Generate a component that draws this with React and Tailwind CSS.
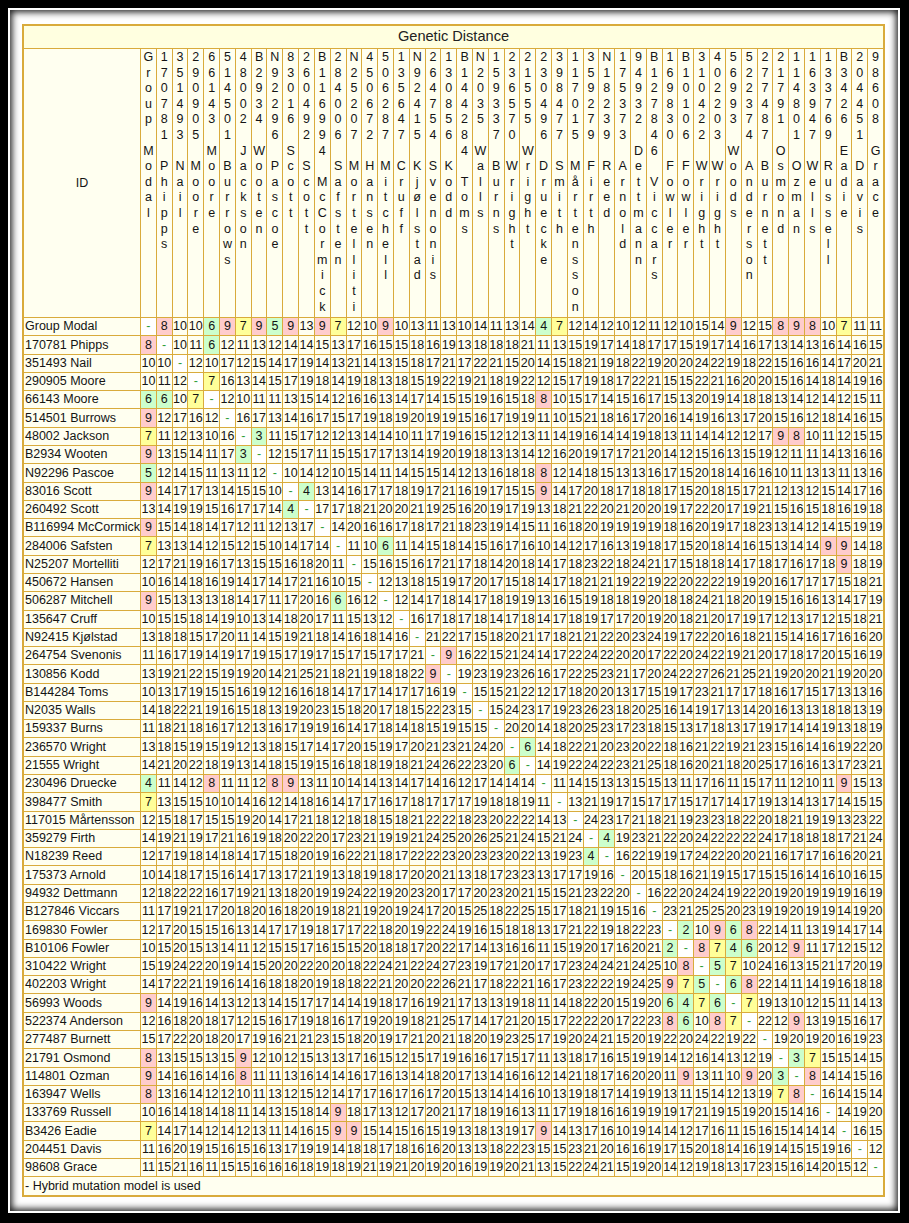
import React from "react";

const NAMES = [
  "Group Modal", "170781 Phipps", "351493 Nail", "290905 Moore", "66143 Moore", "514501 Burrows",
  "48002 Jackson", "B2934 Wooten", "N92296 Pascoe", "83016 Scott", "260492 Scott", "B116994 McCormick",
  "284006 Safsten", "N25207 Mortelliti", "450672 Hansen", "506287 Mitchell", "135647 Cruff",
  "N92415 Kjølstad", "264754 Svenonis", "130856 Kodd", "B144284 Toms", "N2035 Walls", "159337 Burns",
  "236570 Wright", "21555 Wright", "230496 Druecke", "398477 Smith", "117015 Mårtensson", "359279 Firth",
  "N18239 Reed", "175373 Arnold", "94932 Dettmann", "B127846 Viccars", "169830 Fowler", "B10106 Fowler",
  "310422 Wright", "402203 Wright", "56993 Woods", "522374 Anderson", "277487 Burnett", "21791 Osmond",
  "114801 Ozman", "163947 Wells", "133769 Russell", "B3426 Eadie", "204451 Davis", "98608 Grace",
];

const LOWER = [
  "",
  "8",
  "10 10",
  "10 11 12",
  "6 6 10 7",
  "9 12 17 16 12",
  "7 11 12 13 10 16",
  "9 13 15 14 11 17 3",
  "5 12 14 15 11 13 11 12",
  "9 14 17 17 13 14 15 15 10",
  "13 14 19 19 15 16 17 17 14 4",
  "9 15 14 18 14 17 12 11 12 13 17",
  "7 13 13 14 12 15 12 15 10 14 17 14",
  "12 17 21 19 16 17 13 15 15 16 18 20 11",
  "10 16 14 18 16 19 14 17 14 17 21 16 10 15",
  "9 15 13 13 13 18 14 17 11 17 20 16 6 16 12",
  "10 15 15 18 14 19 10 13 14 18 20 17 11 15 13 12",
  "13 18 18 15 17 20 11 14 15 19 21 18 14 16 18 14 16",
  "11 16 17 19 14 19 17 19 15 17 19 17 15 17 15 17 17 21",
  "13 19 21 22 15 19 19 20 14 21 25 21 18 21 19 18 18 22 9",
  "10 13 17 19 15 15 16 19 12 16 16 18 14 17 17 14 17 17 16 19",
  "14 18 22 21 19 16 15 18 13 19 20 23 15 18 20 17 18 15 22 23 15",
  "11 18 21 18 16 17 12 13 16 17 19 19 16 14 17 18 14 18 15 19 15 15",
  "13 18 15 19 15 19 12 13 18 15 17 14 17 20 15 19 17 20 21 23 21 24 20",
  "14 21 20 22 18 19 13 14 18 15 19 15 16 18 18 19 18 21 24 26 22 23 20 6",
  "4 11 14 12 8 11 11 12 8 9 13 11 10 14 14 13 14 17 14 16 12 17 14 14 14",
  "7 13 15 15 10 10 14 16 12 14 18 16 14 17 17 16 17 18 17 17 17 19 18 18 19 11",
  "12 15 18 17 15 15 19 20 14 17 21 18 12 18 18 15 18 21 22 22 18 23 20 22 22 14 13",
  "14 19 21 19 17 21 16 19 18 20 22 20 17 23 21 19 19 21 24 25 20 26 25 21 24 15 21 24",
  "12 17 19 18 14 18 14 17 15 18 20 19 16 22 21 18 17 22 22 23 20 23 23 20 22 13 19 23 4",
  "10 14 18 17 15 16 14 17 13 17 21 19 13 18 19 18 17 20 20 21 13 18 17 23 23 13 17 17 19 16",
  "12 18 22 22 16 17 19 21 13 18 20 19 19 24 22 19 20 23 20 17 17 20 23 20 21 15 15 21 23 22 20",
  "11 17 19 21 17 20 18 20 16 18 20 19 18 21 19 20 19 24 17 20 15 25 18 22 25 15 17 18 21 19 15 16",
  "12 17 20 15 15 16 13 14 17 17 19 18 17 17 22 18 20 19 22 24 19 16 15 18 18 13 17 21 22 19 18 22 23",
  "10 15 20 15 13 14 11 12 15 15 17 16 15 15 20 18 18 17 20 22 17 14 13 16 16 11 15 19 20 17 16 20 21 2",
  "15 19 24 22 20 19 14 15 20 20 22 20 20 18 22 24 21 22 24 27 23 19 17 21 20 17 17 23 24 24 21 24 25 10 8",
  "14 17 22 21 19 16 14 16 18 18 20 19 18 18 22 21 20 20 22 26 21 17 18 22 21 16 17 23 22 22 19 24 25 9 7 5",
  "9 14 19 16 14 13 12 13 14 15 17 17 14 14 19 18 17 16 19 21 17 13 13 19 18 11 14 18 22 20 15 19 20 6 4 7 6",
  "12 16 18 20 18 17 12 15 16 17 19 18 16 17 19 20 19 18 21 25 17 14 17 21 20 15 17 22 22 20 17 22 23 8 6 10 8 7",
  "15 17 22 20 18 20 17 19 16 21 21 23 15 18 20 19 17 21 20 21 18 20 19 23 25 17 19 20 24 21 15 20 19 22 20 24 22 19 22",
  "8 13 15 15 13 15 9 12 10 12 15 13 13 17 16 15 12 15 17 19 16 16 17 15 17 11 13 18 17 16 15 19 19 14 12 16 14 13 12 19",
  "9 14 16 16 14 16 8 11 11 13 16 14 14 16 17 16 13 14 18 20 17 13 14 16 16 12 14 21 18 17 16 20 20 11 9 13 11 10 9 20 3",
  "8 13 16 14 12 12 10 11 13 12 15 12 14 17 17 16 17 16 17 20 15 13 14 14 16 10 13 19 18 17 14 19 19 13 11 15 14 12 13 19 7 8",
  "10 16 14 18 14 18 11 14 13 15 18 14 9 18 17 13 12 17 20 21 17 18 19 16 13 11 17 19 18 16 16 19 19 19 17 21 19 15 19 20 15 14 16",
  "7 14 17 14 12 14 12 13 11 14 16 15 9 9 15 14 15 16 15 19 13 18 13 19 17 9 14 13 17 16 10 19 14 14 12 17 16 11 15 16 15 14 14 14",
  "11 16 20 19 15 16 15 16 13 17 19 19 14 18 18 17 18 16 16 20 13 13 18 22 23 15 15 23 21 20 16 16 19 17 15 20 18 14 16 19 14 15 15 19 16",
  "11 15 21 16 11 15 15 16 16 16 18 19 18 19 21 19 21 20 19 20 16 19 19 20 21 13 15 22 24 21 15 19 20 14 12 19 18 13 17 23 15 16 14 20 15 12",
].map((s) => (s ? s.split(" ").map(Number) : []));

function value(i, j) {
  if (i === j) return "-";
  const v = i > j ? LOWER[i][j] : LOWER[j][i];
  return v === undefined ? "" : v;
}

function cellClass(v) {
  if (v === "-") return "bg-white text-[#2f9e3a]";
  if (v === "") return "bg-[#fffff0]";
  if (v <= 6) return "bg-[#ccffcc]";
  if (v === 7) return "bg-[#ffff99]";
  if (v <= 9) return "bg-[#ffcccc]";
  return "bg-[#fffff0]";
}

function HeaderCell({ name }) {
  return (
    <div className="bg-[#fffff0] flex flex-col items-center pt-[1px] leading-[15.6px] overflow-hidden">
      {name.split("").map((c, k) => (
        <div key={k} className="h-[15.6px]">
          {c === " " ? "\u00a0" : c}
        </div>
      ))}
    </div>
  );
}

export default function App() {
  const n = NAMES.length;
  return (
    <div
      className="min-h-[1223px] w-full bg-black pt-[8px] pl-[8px]"
      style={{ fontFamily: '"Liberation Sans", Arial, sans-serif' }}
    >
      <div className="w-[892px] h-[1205px] border-2 border-white bg-white shadow-[inset_0_0_7px_2px_rgba(0,0,0,0.9)] pl-[12px] pt-[14px]">
        <div className="w-[863px] border-2 border-[#d9ab3c] bg-[#d9ab3c]">
          <div className="grid gap-px grid-cols-[116px_repeat(47,minmax(0,1fr))] grid-rows-[22px_268px_repeat(47,17.29px)_18px] text-[12.5px] text-[#141414]">
            <div className="col-span-full bg-[#ffffe0] flex items-center justify-center text-[14.6px] text-[#222]">
              Genetic Distance
            </div>
            <div className="bg-[#fffff0] flex items-center justify-center">ID</div>
            {NAMES.map((nm) => (
              <HeaderCell key={nm} name={nm} />
            ))}
            {NAMES.map((nm, i) => (
              <React.Fragment key={"r" + i}>
                <div className="bg-[#fffff0] flex items-center pl-[1px] whitespace-nowrap overflow-hidden">
                  {nm}
                </div>
                {Array.from({ length: n }, (_, j) => {
                  const v = value(i, j);
                  return (
                    <div
                      key={j}
                      className={"flex items-center justify-center whitespace-nowrap overflow-hidden " + cellClass(v)}
                    >
                      {v}
                    </div>
                  );
                })}
              </React.Fragment>
            ))}
            <div className="col-span-full bg-[#fffff0] flex items-center pl-[1px]">
              - Hybrid mutation model is used
            </div>
          </div>
        </div>
      </div>
    </div>
  );
}
